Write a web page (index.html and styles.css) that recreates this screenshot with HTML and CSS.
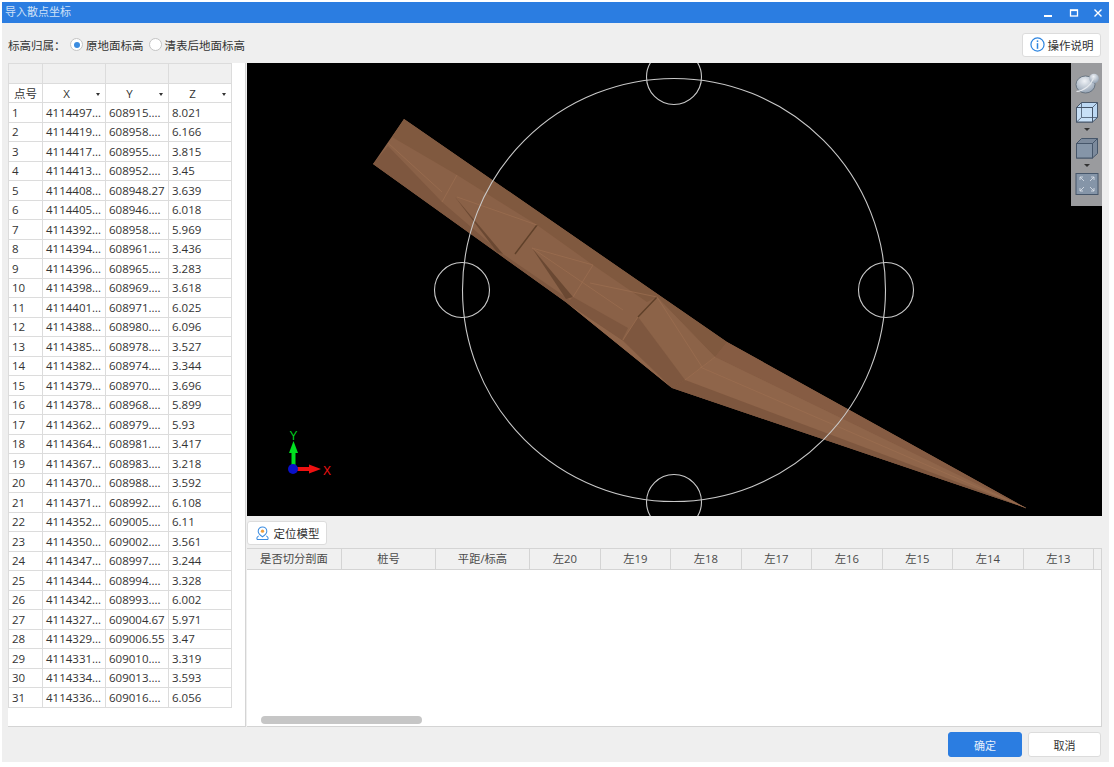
FILE: index.html
```html
<!DOCTYPE html>
<html lang="zh-CN">
<head>
<meta charset="utf-8">
<title>导入散点坐标</title>
<link rel="stylesheet" href="styles.css">
</head>
<body>
<div class="window">
  <header class="titlebar">
    <span class="title">导入散点坐标</span>
    <div class="winctrls">
      <svg class="winicon wide-gap" viewBox="0 0 10 10"><rect x="1" y="7" width="8" height="2" fill="#fff"/></svg>
      <svg class="winicon" viewBox="0 0 10 10"><rect x="1.5" y="2" width="7" height="6" fill="none" stroke="#fff" stroke-width="1.3"/><rect x="1" y="1.5" width="8" height="1.6" fill="#fff"/></svg>
      <svg class="winicon" viewBox="0 0 10 10"><path d="M1.5 1.5L8.5 8.5M8.5 1.5L1.5 8.5" stroke="#fff" stroke-width="1.4"/></svg>
    </div>
  </header>

  <div class="topbar">
    <span class="label">标高归属：</span>
    <span class="radio on"></span><span class="radio-text">原地面标高</span>
    <span class="radio"></span><span class="radio-text">清表后地面标高</span>
    <button class="btn help">
      <svg class="help-icon" viewBox="0 0 16 16"><circle cx="8" cy="8" r="7" fill="#fff" stroke="#2f86e0" stroke-width="1.3"/><rect x="7.2" y="6.6" width="1.6" height="6" fill="#2f86e0"/><rect x="7.2" y="3.6" width="1.6" height="1.7" fill="#2f86e0"/></svg>
      操作说明
    </button>
  </div>

  <main class="main">
    <aside class="points">
      <table class="ptable">
        <colgroup><col class="c0"><col class="c1"><col class="c1"><col class="c1"></colgroup>
        <thead>
          <tr class="blank"><th></th><th></th><th></th><th></th></tr>
          <tr class="heads">
            <th>点号</th>
            <th><div class="hcell"><span>X</span><i class="caret"></i></div></th>
            <th><div class="hcell"><span>Y</span><i class="caret"></i></div></th>
            <th><div class="hcell"><span>Z</span><i class="caret"></i></div></th>
          </tr>
        </thead>
        <tbody>
          <tr><td>1</td><td>4114497...</td><td>608915....</td><td>8.021</td></tr>
          <tr><td>2</td><td>4114419...</td><td>608958....</td><td>6.166</td></tr>
          <tr><td>3</td><td>4114417...</td><td>608955....</td><td>3.815</td></tr>
          <tr><td>4</td><td>4114413...</td><td>608952....</td><td>3.45</td></tr>
          <tr><td>5</td><td>4114408...</td><td>608948.27</td><td>3.639</td></tr>
          <tr><td>6</td><td>4114405...</td><td>608946....</td><td>6.018</td></tr>
          <tr><td>7</td><td>4114392...</td><td>608958....</td><td>5.969</td></tr>
          <tr><td>8</td><td>4114394...</td><td>608961....</td><td>3.436</td></tr>
          <tr><td>9</td><td>4114396...</td><td>608965....</td><td>3.283</td></tr>
          <tr><td>10</td><td>4114398...</td><td>608969....</td><td>3.618</td></tr>
          <tr><td>11</td><td>4114401...</td><td>608971....</td><td>6.025</td></tr>
          <tr><td>12</td><td>4114388...</td><td>608980....</td><td>6.096</td></tr>
          <tr><td>13</td><td>4114385...</td><td>608978....</td><td>3.527</td></tr>
          <tr><td>14</td><td>4114382...</td><td>608974....</td><td>3.344</td></tr>
          <tr><td>15</td><td>4114379...</td><td>608970....</td><td>3.696</td></tr>
          <tr><td>16</td><td>4114378...</td><td>608968....</td><td>5.899</td></tr>
          <tr><td>17</td><td>4114362...</td><td>608979....</td><td>5.93</td></tr>
          <tr><td>18</td><td>4114364...</td><td>608981....</td><td>3.417</td></tr>
          <tr><td>19</td><td>4114367...</td><td>608983....</td><td>3.218</td></tr>
          <tr><td>20</td><td>4114370...</td><td>608988....</td><td>3.592</td></tr>
          <tr><td>21</td><td>4114371...</td><td>608992....</td><td>6.108</td></tr>
          <tr><td>22</td><td>4114352...</td><td>609005....</td><td>6.11</td></tr>
          <tr><td>23</td><td>4114350...</td><td>609002....</td><td>3.561</td></tr>
          <tr><td>24</td><td>4114347...</td><td>608997....</td><td>3.244</td></tr>
          <tr><td>25</td><td>4114344...</td><td>608994....</td><td>3.328</td></tr>
          <tr><td>26</td><td>4114342...</td><td>608993....</td><td>6.002</td></tr>
          <tr><td>27</td><td>4114327...</td><td>609004.67</td><td>5.971</td></tr>
          <tr><td>28</td><td>4114329...</td><td>609006.55</td><td>3.47</td></tr>
          <tr><td>29</td><td>4114331...</td><td>609010....</td><td>3.319</td></tr>
          <tr><td>30</td><td>4114334...</td><td>609013....</td><td>3.593</td></tr>
          <tr><td>31</td><td>4114336...</td><td>609016....</td><td>6.056</td></tr>
        </tbody>
      </table>
    </aside>

    <section class="right">
      <div class="viewport">
        <svg class="scene" viewBox="247 63 855 453">
          <polygon class="f-base" points="404,119 373,164 567,303 672,388 1026,508 727,342"/>
          <polygon class="f-top" points="404,119 392,137 457,175 537,225 593,265 647,302 657,297 715,357 727,342"/>
          <polygon class="f-top2" points="727,342 715,357 1026,508"/>
          <polygon class="f-tail" points="715,357 685,380 1026,508"/>
          <polygon class="f-face" points="638,317 657,297 715,357 685,380"/>
          <polygon class="f-low" points="373,164 388,146 442,202 500,252 570,300 623,340 672,388 567,303"/>
          <polygon class="f-edge" points="567,303 622,340 672,388"/>
          <polygon class="f-low" points="623,340 638,317 685,380 672,388"/>
          <polygon class="f-low" points="573,297 628,328 622,340 567,303"/>
          <polygon class="f-low" points="672,388 685,380 1026,508"/>
          <polygon class="f-dark" points="455,197 497,252 503,254"/>
          <polygon class="f-dark" points="532,248 566,299 573,297"/>
          <path class="l-dark" d="M537 225L515 254M657 297L638 317"/>
          <path class="l-soft" d="M388 143L442 192M457 175L442 202M457 197L537 225M532 248L593 265M532 248L623 310M593 265L573 297M590 283L657 297M638 317L623 340M657 297L702 367M715 357L685 380M700 367L1026 508"/>
          <g class="rings">
            <circle cx="674" cy="290" r="211.5"/>
            <circle cx="674" cy="77" r="27.5"/>
            <circle cx="462" cy="290" r="27.5"/>
            <circle cx="886" cy="290" r="27.5"/>
            <circle cx="674" cy="502" r="27.5"/>
          </g>
          <rect x="291.5" y="450" width="4" height="19" fill="#00e020"/>
          <polygon points="293.500,441 298,453 289,453" fill="#00e020"/>
          <rect x="293" y="467" width="18" height="4" fill="#ee1111"/>
          <polygon points="321,469 309,464.500 309,473.500" fill="#ee1111"/>
          <circle cx="293" cy="469" r="5" fill="#0a10c8"/>
          <text class="axis-y" x="293.500" y="440">Y</text>
          <text class="axis-x" x="323" y="475">X</text>
        </svg>
        <div class="viewtools">
          <svg class="vt first" viewBox="0 0 24 22"><defs><radialGradient id="sph" cx=".45" cy=".3" r=".8"><stop offset="0" stop-color="#f0f3f7"/><stop offset="1" stop-color="#8797aa"/></radialGradient></defs><ellipse cx="10.500" cy="12.500" rx="9.500" ry="8.500" fill="url(#sph)" stroke="#5b6876" stroke-width=".8"/><circle cx="19" cy="6.500" r="4.800" fill="url(#sph)"/><path d="M1.500 19.500C9 19 16 13 18.500 6.500" fill="none" stroke="#e4e8ed" stroke-width="1.100"/></svg>
          <svg class="vt" viewBox="0 0 24 22"><path d="M1.500 6.500L6.500 1.500H22.500V16.500L17.500 21H1.500Z" fill="#bcd8f3" stroke="#46566a"/><rect x="1.500" y="6.500" width="16" height="14.500" fill="#c8e0f7" stroke="#46566a"/><path d="M6.500 1.500V16.500H22.500M6.500 16.500L1.500 21M17.500 6.500L22.500 1.500" fill="none" stroke="#46566a" stroke-width=".8"/></svg>
          <i class="vt-caret"></i>
          <svg class="vt" viewBox="0 0 24 22"><path d="M1.500 6.500L6.500 1.500H22.500V16.500L17.500 21H1.500Z" fill="#7c8a9c" stroke="#46566a"/><rect x="1.500" y="6.500" width="16" height="14.500" fill="#8595a8" stroke="#46566a"/><path d="M17.500 6.500L22.500 1.500" stroke="#46566a"/></svg>
          <i class="vt-caret"></i>
          <svg class="vt" viewBox="0 0 24 22"><rect x="1" y=".5" width="22" height="21" fill="#8595a8" stroke="#46566a"/><path d="M5 4L9 8M5 4V7M5 4H8M19 4L15 8M19 4V7M19 4H16M5 18L9 14M5 18V15M5 18H8M19 18L15 14M19 18V15M19 18H16" fill="none" stroke="#dfe6ee" stroke-width=".8"/></svg>
        </div>
      </div>

      <div class="locbar">
        <button class="btn locate">
          <svg class="pin" viewBox="0 0 16 16"><path d="M8 1a4.600 4.600 0 0 1 4.600 4.600C12.600 8.400 8 11.500 8 11.500S3.400 8.400 3.400 5.600A4.600 4.600 0 0 1 8 1z" fill="#fff" stroke="#3b8ce0" stroke-width="1.100"/><circle cx="8" cy="5.500" r="1.800" fill="#f0a040"/><path d="M4 10.500C2 11.500 1.500 13.300 2.500 14.500H13.500C14.500 13.300 14 11.500 12 10.500" fill="none" stroke="#3b8ce0" stroke-width="1.100"/></svg>
          定位模型
        </button>
      </div>

      <div class="sections">
        <div class="shead">
          <span class="sh wide">是否切分剖面</span>
          <span class="sh mid">桩号</span>
          <span class="sh mid">平距/标高</span>
          <span class="sh">左20</span>
          <span class="sh">左19</span>
          <span class="sh">左18</span>
          <span class="sh">左17</span>
          <span class="sh">左16</span>
          <span class="sh">左15</span>
          <span class="sh">左14</span>
          <span class="sh">左13</span>
        </div>
        <div class="thumb"></div>
      </div>
    </section>
  </main>

  <footer class="footer">
    <button class="btn primary">确定</button>
    <button class="btn cancel">取消</button>
    <span class="grip"></span>
  </footer>
</div>
</body>
</html>
```

FILE: styles.css
```css
* { box-sizing: border-box; }
html, body { margin: 0; height: 100%; background: #fff; }
body {
  padding: 2px 5px 5px 2px;
  font-family: "Open Sans", "Noto Sans CJK SC", sans-serif;
  font-size: 11.5px;
  color: #333;
  overflow: hidden;
}
.window {
  height: 760px;
  display: flex;
  flex-direction: column;
  background: #efefef;
}
.titlebar {
  height: 21px;
  flex: none;
  background: #2b7de1;
  display: flex;
  align-items: center;
  justify-content: space-between;
  padding: 0 6px 0 3px;
}
.title { color: #cfe1f7; font-size: 11px; line-height: 1; margin-top: -3px; }
.winctrls { display: flex; gap: 14px; align-items: center; }
.winicon { width: 10px; height: 10px; display: block; }
.wide-gap { margin-right: 2px; }

.topbar {
  height: 40px;
  flex: none;
  display: flex;
  align-items: center;
  padding: 3px 8px 0 6px;
}
.label { width: 62px; }
.radio {
  width: 13px;
  height: 13px;
  border: 1px solid #c4c4c4;
  border-radius: 50%;
  background: #fff;
  display: flex;
  align-items: center;
  justify-content: center;
  margin-right: 3px;
  flex: none;
}
.radio.on::after {
  content: "";
  width: 6px;
  height: 6px;
  border-radius: 50%;
  background: #3b8ce0;
}
.radio-text { margin-right: 5px; }

.btn {
  font: inherit;
  color: #333;
  background: #fff;
  border: 1px solid #dcdcdc;
  border-radius: 3px;
  padding: 0;
  display: flex;
  align-items: center;
  justify-content: center;
}
.help { margin-left: auto; width: 79px; height: 24px; gap: 3px; }
.help-icon { width: 15px; height: 15px; }

.main { flex: 1; min-height: 0; display: flex; padding: 0 7px 0 6px; gap: 1px; }
.points {
  width: 238px;
  flex: none;
  background: #fff;
  border: 1px solid #d4d4d4;
  border-left: 0;
  border-top: 0;
}
.ptable {
  border-collapse: collapse;
  table-layout: fixed;
  width: 223px;
  font-size: 11.5px;
}
.c0 { width: 34px; }
.c1 { width: 63px; }
.ptable th, .ptable td {
  border: 1px solid #dcdcdc;
  padding: 0;
  font-weight: 400;
  white-space: nowrap;
  overflow: hidden;
  line-height: 1;
}
.ptable td { padding-left: 3px; height: 19.5px; }
.blank th { height: 20px; background: #f0f0f0; }
.heads th { height: 19px; padding-top: 2px; background: #fff; }
.hcell { display: flex; align-items: center; padding-right: 5px; }
.hcell span { flex: 1; text-align: center; margin-right: 6px; }
.caret {
  width: 0;
  height: 0;
  border: 2.5px solid transparent;
  border-top: 3px solid #333;
  border-bottom: 0;
}

.right { flex: 1; min-width: 0; display: flex; flex-direction: column; }
.viewport { height: 453px; flex: none; background: #000; position: relative; overflow: hidden; }
.scene { width: 855px; height: 453px; display: block; }
.f-base { fill: #8a6147; }
.f-top { fill: #80593f; }
.f-top2 { fill: #865c43; }
.f-tail { fill: #8f654a; }
.f-face { fill: #8c6348; }
.f-low { fill: #7e573f; }
.f-edge { fill: #8f654a; }
.f-dark { fill: #6a4832; }
.l-dark { stroke: #5f4029; stroke-width: 1.4; fill: none; }
.l-soft { stroke: #9c6f50; stroke-width: .7; fill: none; }
.rings circle { fill: none; stroke: #c9c9c9; stroke-width: 1.1; }
.axis-y { fill: #00d020; font-size: 12px; text-anchor: middle; font-family: "Liberation Sans", sans-serif; }
.axis-x { fill: #ee1111; font-size: 12px; font-family: "Liberation Sans", sans-serif; }

.viewtools {
  position: absolute;
  top: 0;
  right: 0;
  width: 31px;
  height: 143px;
  background: #9a9b9e;
  display: flex;
  flex-direction: column;
  align-items: center;
  padding-top: 9px;
}
.vt { width: 24px; height: 22px; display: block; flex: none; }
.vt.first { margin-bottom: 7px; }
.vt-caret {
  width: 0;
  height: 0;
  margin: 5px 0 6px;
  border: 3px solid transparent;
  border-top: 3px solid #333;
  border-bottom: 0;
}

.locbar { height: 32px; flex: none; display: flex; align-items: center; padding-top: 2px; }
.locate { width: 80px; height: 24px; gap: 4px; }
.pin { width: 15px; height: 15px; }

.sections {
  flex: 1;
  min-height: 0;
  position: relative;
  background: #fff;
  border: 1px solid #d4d4d4;
  border-top: 0;
  border-left: 0;
  overflow: hidden;
}
.shead {
  display: flex;
  height: 22px;
  background: #f0f0f0;
  border-top: 1px solid #d4d4d4;
  border-bottom: 1px solid #d4d4d4;
  font-size: 11.3px;
}
.sh {
  width: 70.5px;
  flex: none;
  text-align: center;
  line-height: 20px;
  border-right: 1px solid #d4d4d4;
  color: #4a4a4a;
}
.sh.wide { width: 95px; }
.sh.mid { width: 94px; }
.thumb {
  position: absolute;
  left: 14px;
  bottom: 2px;
  width: 161px;
  height: 8px;
  border-radius: 4px;
  background: #c6c6c6;
}

.footer {
  flex: none;
  height: 35px;
  display: flex;
  align-items: flex-start;
  justify-content: flex-end;
  gap: 6px;
  padding: 5px 8px 0 0;
  position: relative;
}
.primary { width: 74px; height: 25px; background: #2b7de1; border-color: #2b7de1; color: #e6f0fc; font-size: 11px; }
.cancel { width: 73px; height: 25px; font-size: 11px; }
.grip {
  position: absolute;
  right: 0;
  bottom: 0;
  width: 4px;
  height: 4px;
  background: radial-gradient(circle, #777 35%, transparent 40%) 0 0 / 2px 2px;
}
```
